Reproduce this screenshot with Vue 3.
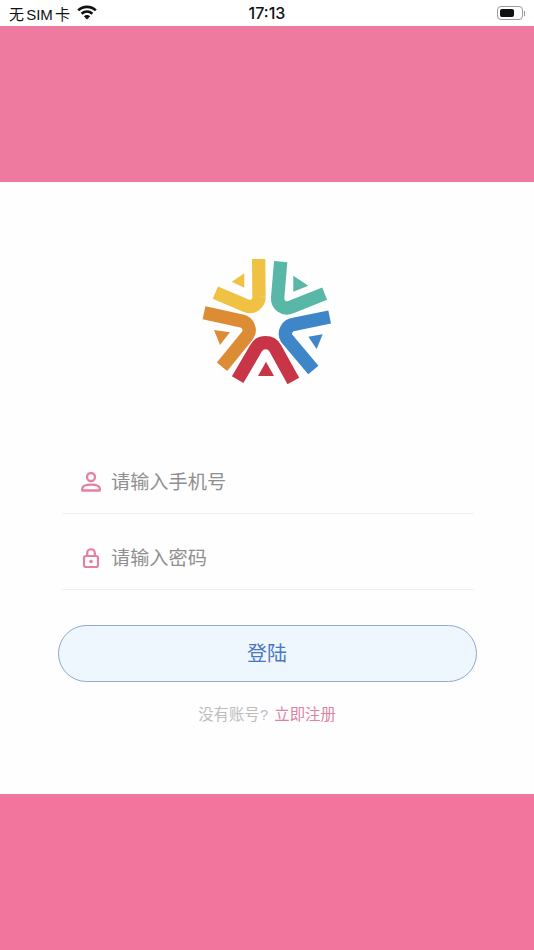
<template>
  <div class="page">
    <!-- Статус-бар -->
    <div class="status-bar">
      <div class="status-left">
        <span class="carrier">无 SIM 卡</span>
        <svg class="wifi" viewBox="0 0 20 15" width="20" height="15">
          <path d="M1.2 5.4 C6 0.8 14 0.8 18.8 5.4" fill="none" stroke="#111" stroke-width="2.7" />
          <path d="M4.6 8.7 C7.8 5.9 12.2 5.9 15.4 8.7" fill="none" stroke="#111" stroke-width="2.7" />
          <path d="M10 14.6 L6.8 11.2 C8.8 9.7 11.2 9.7 13.2 11.2 Z" fill="#111" />
        </svg>
      </div>
      <span class="time">17:13</span>
      <div class="battery">
        <div class="battery-body"><div class="battery-level"></div></div>
        <div class="battery-cap"></div>
      </div>
    </div>

    <div class="band band-top"></div>

    <div class="main">
      <!-- Логотип -->
      <svg class="logo" viewBox="0 0 465 450" width="155" height="150">
        <g fill="none" stroke-width="40">
          <path d="M206 42 L207 155 A28 28 0 0 1 170 183 L76 143" stroke="#efc244" />
          <path d="M272 50 L263 158 A28 28 0 0 0 303 186 L404 146" stroke="#58b7a7" />
          <path d="M419 216 L312 238 A28 28 0 0 0 290 280 L370 375" stroke="#3f86c9" />
          <path d="M143 404 L198 310 A33 33 0 0 1 256 310 L310 408" stroke="#c73546" />
          <path d="M42 203 L155 228 A28 28 0 0 1 172 272 L96 365" stroke="#dd8c36" />
        </g>
        <path d="M125 110 L163 85 L163 128 Z" fill="#efc244" />
        <path d="M310 92 L355 122 L310 140 Z" fill="#58b7a7" />
        <path d="M355 275 L398 268 L380 312 Z" fill="#3f86c9" />
        <path d="M204 393 L228 350 L252 393 Z" fill="#c73546" />
        <path d="M72 255 L120 262 L90 300 Z" fill="#dd8c36" />
      </svg>

      <!-- Форма входа -->
      <form class="login-form" @submit.prevent>
        <div class="field">
          <svg class="field-icon" viewBox="0 0 24 24" width="24" height="24">
            <circle cx="12" cy="7" r="4" fill="none" stroke="#e580a3" stroke-width="2.3" />
            <path d="M3.2 20.5 V19 C3.2 16.5 6 14.6 12 14.6 C18 14.6 20.8 16.5 20.8 19 V20.5 Z" fill="none" stroke="#e580a3" stroke-width="2.3" stroke-linejoin="round" />
          </svg>
          <input v-model="phone" type="text" placeholder="请输入手机号" />
        </div>
        <div class="field">
          <svg class="field-icon" viewBox="0 0 24 24" width="24" height="24">
            <rect x="5" y="10" width="14" height="11" rx="2" fill="none" stroke="#e580a3" stroke-width="2.2" />
            <path d="M8.2 10 V7 C8.2 2 15.8 2 15.8 7 V10" fill="none" stroke="#e580a3" stroke-width="2.2" />
            <circle cx="12" cy="15.5" r="1.8" fill="#e580a3" />
          </svg>
          <input v-model="password" type="password" placeholder="请输入密码" />
        </div>
      </form>

      <button class="login-btn" type="button">登陆</button>
      <p class="register">没有账号?<a class="register-link">立即注册</a></p>
    </div>

    <div class="band band-bottom"></div>
  </div>
</template>

<script setup>
import { ref } from 'vue';

const phone = ref('');
const password = ref('');
</script>

<style scoped>
.page {
  display: flex;
  flex-direction: column;
  height: 950px;
  background: #fff;
  font-family: "Liberation Sans", "Noto Sans CJK SC", sans-serif;
  overflow: hidden;
}

.status-bar {
  height: 26px;
  display: flex;
  align-items: center;
  justify-content: space-between;
  padding: 0 9px;
  position: relative;
  color: #111;
}

.status-left {
  display: flex;
  align-items: center;
  gap: 7px;
}

.carrier {
  font-size: 15px;
  word-spacing: -2px;
}

.wifi {
  margin-bottom: 1px;
}

.time {
  position: absolute;
  left: 0;
  right: 0;
  text-align: center;
  font-family: Inter, "Liberation Sans", sans-serif;
  font-size: 16px;
  font-weight: 500;
}

.battery {
  display: flex;
  align-items: center;
  gap: 1px;
}

.battery-body {
  width: 26px;
  height: 14px;
  box-sizing: border-box;
  border: 1px solid #9a9a9a;
  border-radius: 4px;
  padding: 2px;
}

.battery-level {
  width: 14px;
  height: 100%;
  background: #111;
  border-radius: 2px;
}

.battery-cap {
  width: 1.5px;
  height: 5px;
  background: #9a9a9a;
}

.band {
  height: 156px;
  flex-shrink: 0;
}

.band-top {
  background: #ee7a9f;
}

.band-bottom {
  background: #f2759d;
}

.main {
  flex: 1;
  display: flex;
  flex-direction: column;
  align-items: center;
  padding-top: 63px;
  background: #fefefe;
}

.logo {
  display: block;
}

.login-form {
  width: 412px;
  margin: 43px 0 0 2px;
  box-sizing: border-box;
}

.field {
  height: 76px;
  box-sizing: border-box;
  display: flex;
  align-items: center;
  gap: 8px;
  padding: 13px 0 0 17px;
  border-bottom: 1px solid #efefef;
}

.field-icon {
  flex-shrink: 0;
}

.field input {
  flex: 1;
  min-width: 0;
  border: none;
  outline: none;
  padding: 2px 0 0;
  background: transparent;
  font-family: inherit;
  font-size: 19.2px;
  color: #333;
}

.field input::placeholder {
  color: #8f8f8f;
}

.login-btn {
  width: 419px;
  height: 57px;
  margin-top: 35px;
  box-sizing: border-box;
  border: 1px solid #8fa9cf;
  border-radius: 29px;
  padding: 0 0 3px;
  background: #eff7fe;
  color: #4a76c4;
  font-family: inherit;
  font-size: 20px;
}

.register {
  margin: 23px 0 0;
  font-size: 15.4px;
  line-height: 20px;
  color: #bdbdbd;
}

.register-link {
  margin-left: 6px;
  color: #dc83a4;
}
</style>

<style>
body {
  margin: 0;
}
</style>
